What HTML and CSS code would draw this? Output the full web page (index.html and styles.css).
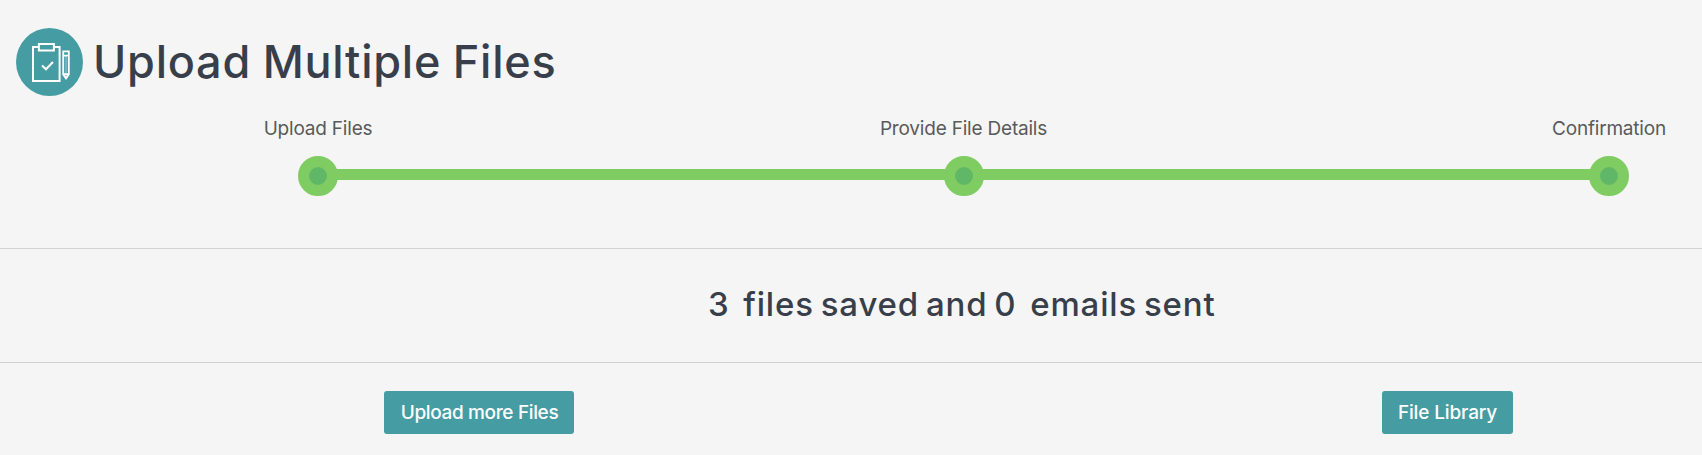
FILE: index.html
```html
<!DOCTYPE html>
<html lang="en">

<head>
    <meta charset="UTF-8" />
    <meta name="viewport" content="width=device-width, initial-scale=1.0" />
    <title>Upload Multiple Files</title>

    <link rel="stylesheet" href="styles.css">
</head>

<body>
    <header class="page-header">
        <svg class="page-icon" viewBox="0 0 68 68" fill="none" stroke="#fff">
            <ellipse cx="33.5" cy="34" rx="33.5" ry="34" fill="#459ca3" stroke="none" />
            <path d="M22.5 19H17v33.9h26.6V19H38" stroke-width="2" />
            <path d="M22.9 16h15v6.4h-15z" stroke-width="2" />
            <path d="M26 37.4l4 3.8 7-7.2" stroke-width="2.1" />
            <path d="M47.2 23.4h5.6v23l-2.8 4-2.8-4zM47.2 27.6h5.6M47.2 46.2h5.6" stroke-width="1.8" />
            <path d="M50 28v18" stroke-width="1" stroke-opacity="0.5" />
            <path d="M48.4 47.5h3.2L50 50z" fill="#fff" stroke="none" />
        </svg>
        <h1 class="page-title">Upload Multiple Files</h1>
    </header>

    <ol class="steps">
        <li class="step">
            <span class="step-label">Upload Files</span>
            <span class="step-dot"></span>
        </li>
        <li class="step">
            <span class="step-label">Provide File Details</span>
            <span class="step-dot"></span>
        </li>
        <li class="step">
            <span class="step-label">Confirmation</span>
            <span class="step-dot"></span>
        </li>
    </ol>

    <section class="summary">
        <h2 class="summary-text">3&nbsp; files saved and 0&nbsp; emails sent</h2>
    </section>

    <div class="actions">
        <button type="button" class="btn btn-upload">Upload more Files</button>
        <button type="button" class="btn btn-library">File Library</button>
    </div>
</body>

</html>
```
FILE: styles.css
```css
* {
    box-sizing: border-box;
    margin: 0;
    padding: 0;
}

body {
    background-color: #f5f5f5;
    color: #383f4b;
    font-family: Inter, "Liberation Sans", sans-serif;
    height: 455px;
    overflow: hidden;
}

.page-header {
    align-items: center;
    display: flex;
    height: 96px;
    padding: 28px 0 0 16px;
}

.page-icon {
    flex: none;
    height: 68px;
    width: 68px;
}

.page-title {
    font-size: 45px;
    font-weight: 500;
    letter-spacing: 0.75px;
    line-height: 68px;
    margin-left: 9px;
    white-space: nowrap;
    word-spacing: -1px;
}

.steps {
    background: linear-gradient(#7fcd62, #7fcd62) 20px 73px / 1291px 11px no-repeat;
    display: flex;
    height: 152px;
    justify-content: space-between;
    list-style-type: none;
    margin-left: 298px;
    padding-top: 21px;
    width: 1331px;
}

.step {
    align-items: center;
    display: flex;
    flex-direction: column;
    width: 40px;
}

.step-label {
    color: #5a5a5a;
    font-size: 19px;
    letter-spacing: -0.2px;
    line-height: 24px;
    margin-bottom: 15px;
    white-space: nowrap;
}

.step-dot {
    background-color: #61b768;
    border: 11px solid #7fcd62;
    border-radius: 50%;
    height: 40px;
    width: 40px;
}

.summary {
    border-bottom: 1px solid #d1d1d1;
    border-top: 1px solid #d1d1d1;
    height: 115px;
    padding: 34px 0 0 708px;
}

.summary-text {
    font-size: 33px;
    font-weight: 500;
    letter-spacing: 0.85px;
    line-height: 42px;
    white-space: nowrap;
    word-spacing: -2.8px;
}

.actions {
    display: flex;
    gap: 808px;
    padding: 28px 0 0 384px;
}

.btn {
    background-color: #459ca3;
    border: none;
    border-radius: 3px;
    color: #fff;
    flex: none;
    font-family: inherit;
    font-size: 19px;
    font-weight: 500;
    height: 43px;
    letter-spacing: -0.35px;
    line-height: 43px;
    white-space: nowrap;
}

.btn-upload {
    padding-left: 1px;
    width: 190px;
}

.btn-library {
    letter-spacing: -0.15px;
    width: 131px;
}

.btn:hover {
    cursor: pointer;
}
```
